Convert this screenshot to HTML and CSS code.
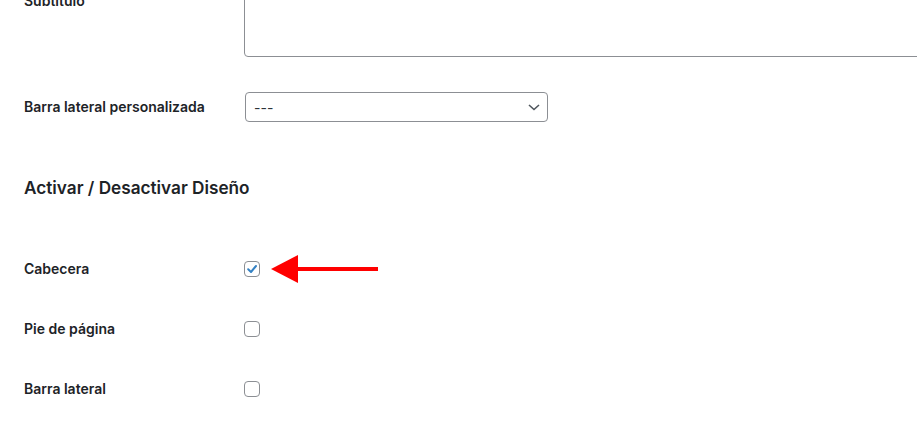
FILE: index.html
```html
<!DOCTYPE html>
<html>
<head>
    <meta charset="UTF-8">
    <title>Opciones de página</title>
    <link rel="stylesheet" href="styles.css">
</head>
<body>
    <div class="wrap">
        <div class="row row-top">
            <label class="label label-top" for="subtitulo">Subtitulo</label>
            <textarea class="textarea" id="subtitulo"></textarea>
        </div>

        <div class="row row-select">
            <label class="label" for="sidebar">Barra lateral personalizada</label>
            <div class="select-box">
                <select class="select" id="sidebar">
                    <option>---</option>
                </select>
                <svg class="chevron" width="12" height="7" viewBox="0 0 12 7">
                    <path d="M1 1 L6 5.5 L11 1" fill="none" stroke="#50575e" stroke-width="1.6"/>
                </svg>
            </div>
        </div>

        <h2 class="section-title">Activar / Desactivar Diseño</h2>

        <div class="row row-check first">
            <label class="label" for="cabecera">Cabecera</label>
            <span class="check-box">
                <input type="checkbox" class="check" id="cabecera" checked>
                <svg class="tick" width="16" height="16" viewBox="0 0 16 16">
                    <path d="M4.2 8.3 L7 11 L12 5" fill="none" stroke="#3582c4" stroke-width="2" stroke-linecap="round" stroke-linejoin="round"/>
                </svg>
            </span>
            <svg class="arrow" width="108" height="29" viewBox="0 0 108 29">
                <polygon points="0,14 27,0 27,28" fill="#f00"/>
                <rect x="26" y="12" width="81" height="4" fill="#f00"/>
            </svg>
        </div>

        <div class="row row-check">
            <label class="label" for="pie">Pie de página</label>
            <span class="check-box">
                <input type="checkbox" class="check" id="pie">
            </span>
        </div>

        <div class="row row-check">
            <label class="label" for="lateral">Barra lateral</label>
            <span class="check-box">
                <input type="checkbox" class="check" id="lateral">
            </span>
        </div>
    </div>
</body>
</html>
```

FILE: styles.css
```css
body {
    margin: 0;
    background: #fff;
    font-family: Inter, "Noto Sans", sans-serif;
    color: #1d2327;
    overflow: hidden;
}

.wrap {
    padding: 0 0 0 24px;
    margin-top: -13px;
}

.row {
    display: flex;
    align-items: center;
}

.label {
    width: 220px;
    flex-shrink: 0;
    font-size: 14px;
    font-weight: 600;
    line-height: 18px;
}

/* Subtitulo */
.row-top {
    align-items: flex-start;
}

.label-top {
    padding-top: 5px;
}

.textarea {
    display: block;
    flex-shrink: 0;
    width: 720px;
    height: 70px;
    margin: 0;
    padding: 2px 6px;
    box-sizing: border-box;
    border: 1px solid #8c8f94;
    border-radius: 4px;
    resize: none;
    font: inherit;
}

/* Barra lateral personalizada */
.row-select {
    margin-top: 35px;
}

.select-box {
    position: relative;
    margin-left: 1px;
}

.select {
    -webkit-appearance: none;
    appearance: none;
    display: block;
    width: 303px;
    height: 30px;
    margin: 0;
    padding: 0 24px 0 8px;
    border: 1px solid #8c8f94;
    border-radius: 4px;
    background: #fff;
    color: #2c3338;
    font-family: inherit;
    font-size: 14px;
}

.chevron {
    position: absolute;
    right: 8px;
    top: 12px;
    pointer-events: none;
}

/* Titulo de seccion */
.section-title {
    margin: 53px 0 0;
    font-size: 17.2px;
    font-weight: 600;
    line-height: 25px;
}

/* Casillas */
.row-check {
    height: 60px;
}

.row-check.first {
    margin-top: 39px;
}

.check-box {
    position: relative;
    width: 16px;
    height: 16px;
}

.check {
    -webkit-appearance: none;
    appearance: none;
    display: block;
    width: 16px;
    height: 16px;
    margin: 0;
    border: 1px solid #8c8f94;
    border-radius: 4px;
    background: #fff;
}

.tick {
    position: absolute;
    left: 0;
    top: 0;
    pointer-events: none;
}

.arrow {
    display: block;
    margin-left: 11px;
    margin-top: 1px;
}
```
